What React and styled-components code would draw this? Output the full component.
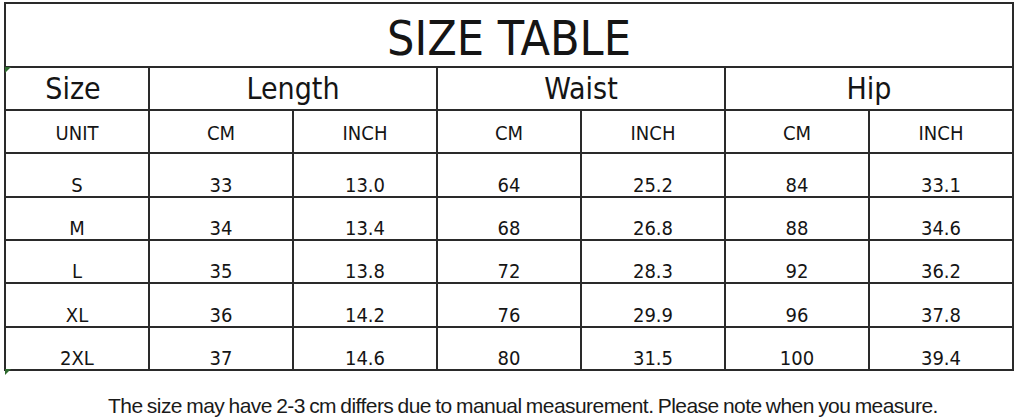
import React from "react";
import styled, { createGlobalStyle } from "styled-components";

const GlobalStyle = createGlobalStyle`
  html, body {
    margin: 0;
    padding: 0;
    background: #ffffff;
  }
  body {
    font-family: "DejaVu Sans Condensed", "DejaVu Sans", sans-serif;
    font-stretch: condensed;
    color: #111;
  }
`;

const Page = styled.div`
  width: 1017px;
  height: 419px;
  padding: 2px 0 0 4px;
  box-sizing: border-box;
  overflow: hidden;
`;

const Table = styled.div`
  position: relative;
  display: grid;
  grid-template-columns: repeat(7, 142px);
  grid-template-rows: 62px 41px 41px 42px 41px 41px 42px 41px;
  gap: 2px;
  width: 1010px;
  box-sizing: border-box;
  border: 2px solid #2a2a2a;
  background: #2a2a2a;
`;

const Cell = styled.div`
  background: #fff;
  display: flex;
  justify-content: center;
  align-items: ${(p) => (p.$bottom ? "flex-end" : "center")};
  grid-column: span ${(p) => p.$span || 1};
  font-size: ${(p) => p.$size || 20}px;
  line-height: 1;
  padding-bottom: ${(p) => p.$pb || 0}px;
  padding-top: ${(p) => p.$pt || 0}px;
  padding-right: ${(p) => p.$pr || 0}px;
  box-sizing: border-box;
  color: #151515;
  white-space: nowrap;
`;

const Marker = styled.span`
  position: absolute;
  left: -1px;
  top: ${(p) => p.$top}px;
  width: 0;
  height: 0;
  border-top: 6px solid #2f6a2f;
  border-right: 6px solid transparent;
`;

const Note = styled.p`
  margin: 23px 0 0 104px;
  font-family: "Liberation Sans", Arial, sans-serif;
  font-stretch: normal;
  font-size: 21px;
  letter-spacing: -0.55px;
  word-spacing: -1px;
  color: #1a1a1a;
  white-space: nowrap;
`;

const rows = [
  ["S", "33", "13.0", "64", "25.2", "84", "33.1"],
  ["M", "34", "13.4", "68", "26.8", "88", "34.6"],
  ["L", "35", "13.8", "72", "28.3", "92", "36.2"],
  ["XL", "36", "14.2", "76", "29.9", "96", "37.8"],
  ["2XL", "37", "14.6", "80", "31.5", "100", "39.4"],
];

const units = ["UNIT", "CM", "INCH", "CM", "INCH", "CM", "INCH"];

export default function App() {
  return (
    <Page>
      <GlobalStyle />
      <Table>
        <Cell $span={7} $size={48} $pt={6}>SIZE TABLE</Cell>
        <Cell $size={30} $pr={8}>Size</Cell>
        <Cell $span={2} $size={30}>Length</Cell>
        <Cell $span={2} $size={30}>Waist</Cell>
        <Cell $span={2} $size={30}>Hip</Cell>
        {units.map((u, i) => (
          <Cell key={"u" + i} $size={20} $pt={2}>{u}</Cell>
        ))}
        {rows.map((r) =>
          r.map((v, i) => (
            <Cell key={r[0] + i} $bottom $pb={1}>{v}</Cell>
          ))
        )}
        <Marker $top={63} />
        <Marker $top={365} />
      </Table>
      <Note>The size may have 2-3 cm differs due to manual measurement. Please note when you measure.</Note>
    </Page>
  );
}
